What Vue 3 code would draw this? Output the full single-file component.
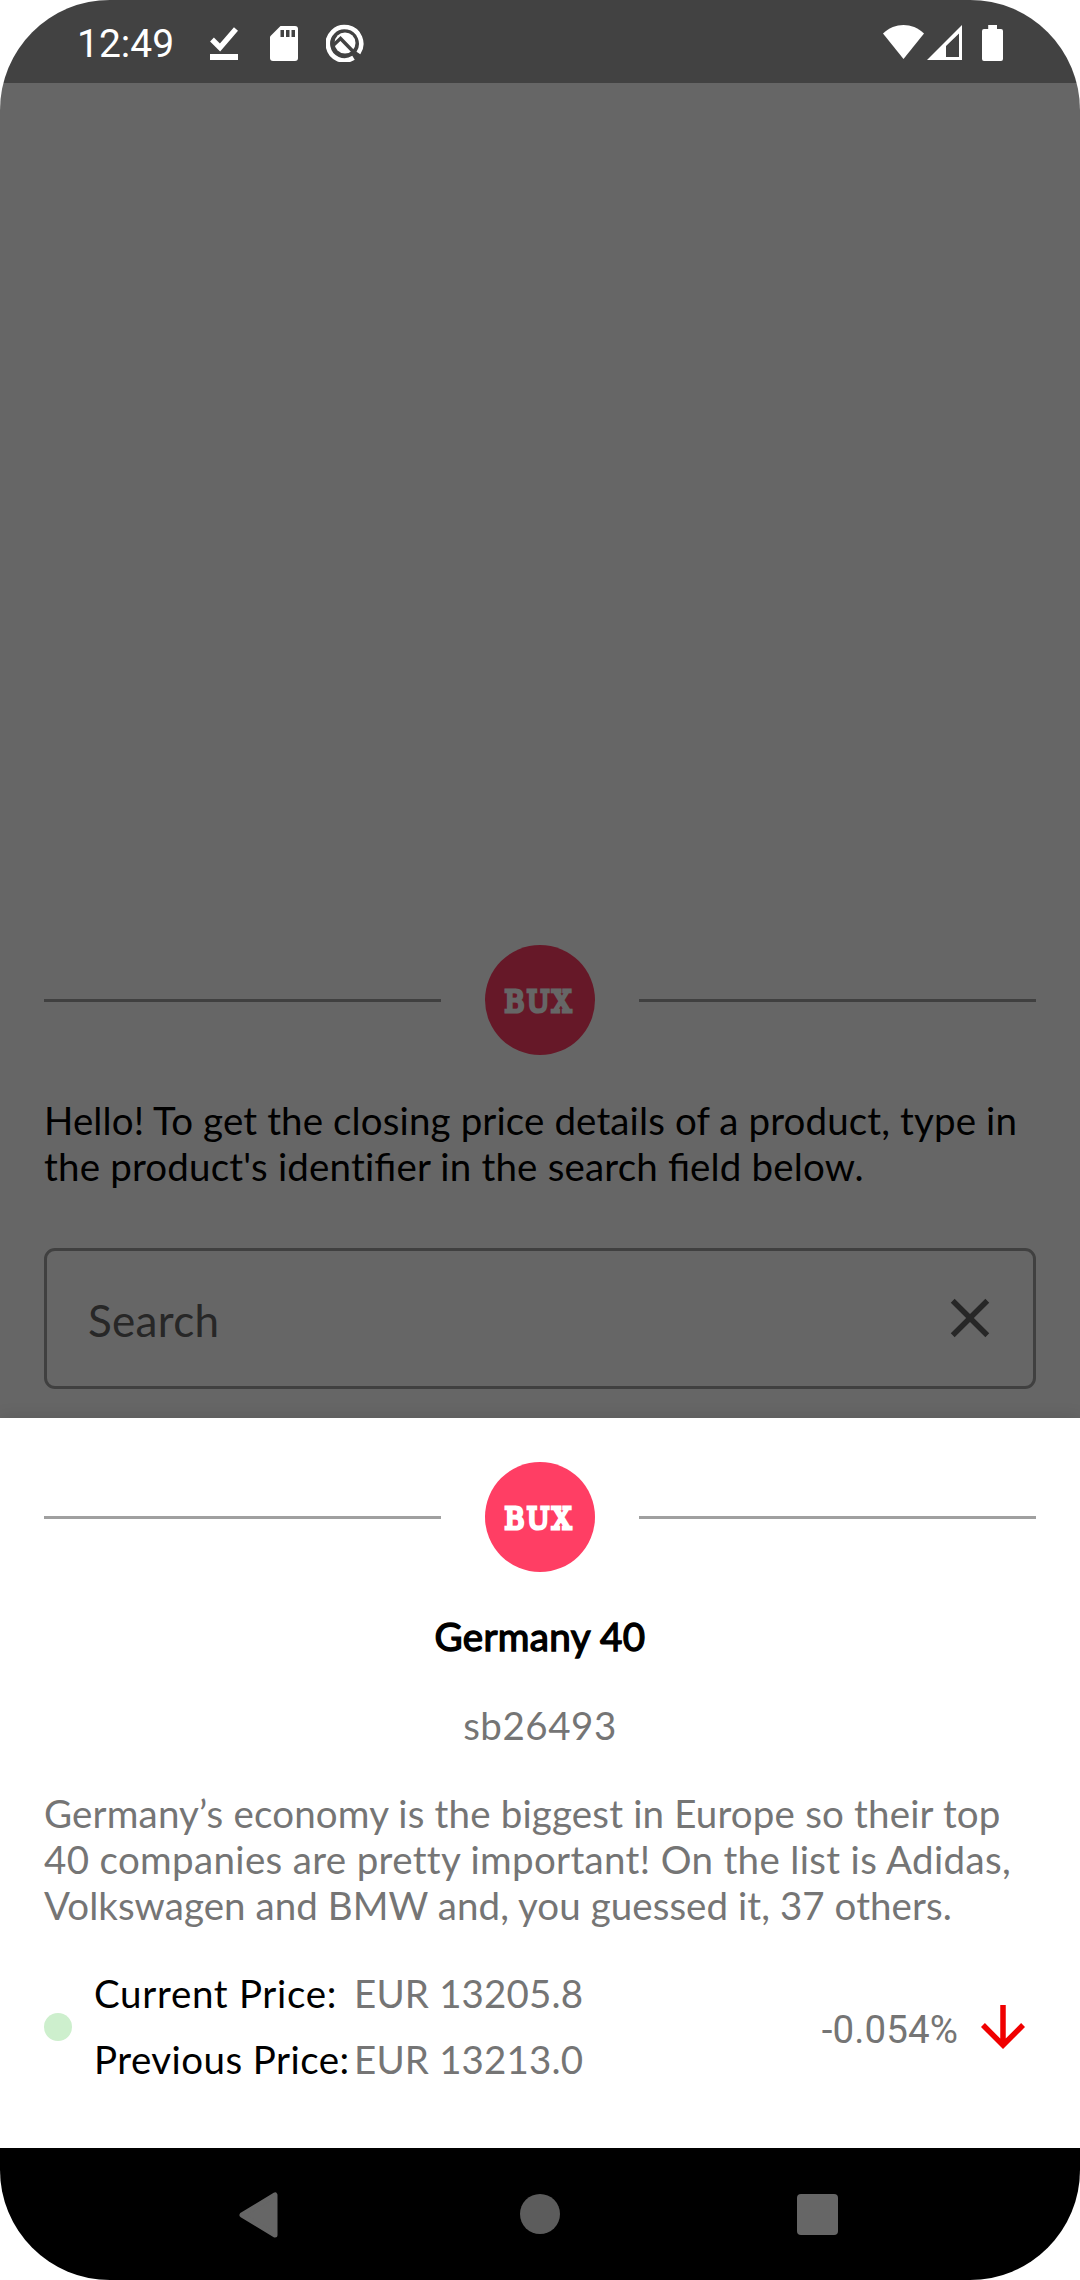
<script setup>
import { h } from 'vue'

const hello = { first: 'Hello! To get the closing price details of a product, type in' }
const product = {
  name: 'Germany 40',
  id: 'sb26493',
  description: [
    { text: 'Germany’s economy is the biggest in Europe so their top', spacing: 0.17 },
    { text: '40 companies are pretty important! On the list is Adidas,', spacing: 0.34 },
    { text: 'Volkswagen and BMW and, you guessed it, 37 others.', spacing: 0.06 }
  ],
  change: '-0.054%'
}
const prices = [
  { label: 'Current Price:', value: 'EUR 13205.8', spacing: 0.7 },
  { label: 'Previous Price:', value: 'EUR 13213.0', spacing: 0.45 }
]

const BuxLogo = () =>
  h('svg', { width: 110, height: 110, viewBox: '0 0 110 110' }, [
    h('circle', { cx: 55, cy: 55, r: 55, fill: '#ff3e64' }),
    h('text', {
      x: 19.5, y: 67.4, textLength: 69, lengthAdjust: 'spacingAndGlyphs',
      'font-family': '"DejaVu Serif", serif', 'font-size': 30, 'letter-spacing': 2.6,
      fill: '#fff', stroke: '#fff', 'stroke-width': 3.2
    }, 'BUX')
  ])
</script>

<template>
  <div class="phone">
    <header class="status">
      <span class="time">12:49</span>
      <svg class="ic-done" width="28" height="34" viewBox="0 0 28 34">
        <path d="M2 13.5L10 21.5L26 3" fill="none" stroke="#fff" stroke-width="5.4" />
        <path d="M0 28h28v6H0z" fill="#fff" />
      </svg>
      <svg class="ic-sd" width="28" height="35" viewBox="0 0 28 35">
        <path d="M10.500 0H25a3 3 0 0 1 3 3V32a3 3 0 0 1-3 3H3a3 3 0 0 1-3-3V10.500z" fill="#fff" />
        <path d="M10.500 4h3.500v7h-3.500zM16 4h3.500v7H16zM21.500 4H25v7h-3.500z" fill="#424242" />
      </svg>
      <svg class="ic-q" width="38" height="38" viewBox="0 0 38 38">
        <path d="M27.500 33.800A16.700 16.700 0 1 1 32.400 29" fill="none" stroke="#fff" stroke-width="4.600" />
        <circle cx="19" cy="19" r="10.500" fill="#fff" />
        <path d="M6 22.500L14.500 14.500L31.500 32" fill="none" stroke="#424242" stroke-width="3.400" />
      </svg>
      <span class="grow"></span>
      <svg width="41" height="34" viewBox="0 0 41 34">
        <path d="M20.500 34L0 8.500C12 -2.700 29 -2.700 41 8.500z" fill="#fff" />
      </svg>
      <svg class="ic-cell" width="35" height="35" viewBox="0 0 35 35">
        <path fill-rule="evenodd" d="M35 0V35H0zM32 8.500L19 21V32H32z" fill="#fff" />
      </svg>
      <svg class="ic-bat" width="21" height="36" viewBox="0 0 21 36">
        <path d="M6.200 0h8.800v4h4a2 2 0 0 1 2 2v28a2 2 0 0 1-2 2H2a2 2 0 0 1-2-2V6a2 2 0 0 1 2-2h4.200z" fill="#fff" />
      </svg>
    </header>

    <main class="page">
      <div class="brand"><i></i><BuxLogo /><i></i></div>
      <p class="hello">{{ hello.first }}<br /><span class="second">the product's identi<b>fi</b>er in the search <b>fi</b>eld below.</span></p>
      <div class="search">
        <span>Search</span>
        <svg width="66" height="66" viewBox="0 0 24 24">
          <path fill="#616161" d="M19 6.410L17.590 5 12 10.590 6.410 5 5 6.410 10.590 12 5 17.590 6.410 19 12 13.410 17.590 19 19 17.590 13.410 12z" />
        </svg>
      </div>
      <div class="scrim"></div>
    </main>

    <section class="sheet">
      <div class="brand"><i></i><BuxLogo /><i></i></div>
      <h1>{{ product.name }}</h1>
      <p class="ident">{{ product.id }}</p>
      <p class="desc">
        <span v-for="line in product.description" :key="line.text" :style="{ letterSpacing: line.spacing + 'px' }">{{ line.text }}</span>
      </p>
      <div class="quote">
        <span class="dot"></span>
        <dl>
          <div v-for="p in prices" :key="p.label">
            <dt :style="{ letterSpacing: p.spacing + 'px' }">{{ p.label }}</dt>
            <dd>{{ p.value }}</dd>
          </div>
        </dl>
        <span class="change">{{ product.change }}</span>
        <svg class="arrow" width="66" height="66" viewBox="0 0 24 24">
          <path fill="#f00000" d="M20 12l-1.410-1.410L13 16.170V4h-2v12.170l-5.580-5.590L4 12l8 8z" />
        </svg>
      </div>
    </section>

    <nav class="nav">
      <svg class="back" width="39" height="46" viewBox="0 0 39 46">
        <path d="M36 3V43L3 23z" fill="#666" stroke="#666" stroke-width="5" stroke-linejoin="round" />
      </svg>
      <span class="home"></span>
      <span class="recent"></span>
    </nav>
  </div>
</template>

<style>
body {
  margin: 0;
  background: #fff;
}
</style>

<style scoped>
.phone {
  width: 1080px;
  height: 2280px;
  display: flex;
  flex-direction: column;
  overflow: hidden;
  border-radius: 110px;
  background: #fff;
  font-family: Lato, sans-serif;
  font-size: 38.5px;
  line-height: 46px;
  font-variant-ligatures: none;
  color: #000;
}
p, h1, dl, dd {
  margin: 0;
}
svg {
  display: block;
  flex: none;
}
.status {
  height: 83px;
  flex: none;
  box-sizing: border-box;
  padding: 25px 77px 0 77px;
  display: flex;
  align-items: flex-start;
  background: #424242;
}
.time {
  width: 133px;
  font-family: Roboto, sans-serif;
  font-size: 39px;
  line-height: 38px;
  color: #fff;
}
.ic-done { margin-top: 1px; }
.ic-sd { margin: 1px 0 0 32px; }
.ic-q { margin: -1px 0 0 28px; }
.grow { flex: 1; }
.ic-cell { margin-left: 3px; }
.ic-bat { margin-left: 20px; }
.page {
  position: relative;
  height: 1335px;
  flex: none;
  box-sizing: border-box;
  padding: 862px 44px 0;
}
.scrim {
  position: absolute;
  inset: 0;
  background: rgba(0, 0, 0, 0.6);
}
.brand {
  display: flex;
  align-items: center;
  gap: 44px;
}
.brand i {
  flex: 1;
  height: 3px;
  background: #a0a0a0;
}
.hello {
  margin-top: 42px;
  white-space: nowrap;
  letter-spacing: 0.12px;
}
.second {
  letter-spacing: 0.18px;
}
.hello b {
  font-weight: 400;
  letter-spacing: 0;
  font-variant-ligatures: common-ligatures;
}
.search {
  height: 141px;
  box-sizing: border-box;
  margin-top: 59px;
  padding: 0 30px 2px 41px;
  display: flex;
  align-items: center;
  justify-content: space-between;
  border: 3px solid #a0a0a0;
  border-radius: 11px;
  font-size: 44px;
  letter-spacing: 0.3px;
  color: #616161;
}
.search span {
  margin-top: 5px;
}
.sheet {
  position: relative;
  height: 730px;
  flex: none;
  box-sizing: border-box;
  padding: 44px 44px 0;
  background: #fff;
  color: #757575;
  box-shadow: 0 0 16px rgba(0, 0, 0, 0.12);
}
h1 {
  margin-top: 41px;
  font-size: 38.5px;
  font-weight: 400;
  -webkit-text-stroke: 1.4px #000;
  letter-spacing: 0.35px;
  text-align: center;
  color: #000;
}
.ident {
  margin-top: 43px;
  text-align: center;
  letter-spacing: 0.55px;
}
.desc {
  margin-top: 42px;
}
.desc span {
  display: block;
  white-space: nowrap;
}
.quote {
  display: flex;
  align-items: center;
  margin-top: 32px;
  height: 132px;
}
.dot {
  width: 28px;
  height: 28px;
  margin-top: 2px;
  border-radius: 50%;
  background: #cdefcd;
}
dl {
  flex: 1;
  margin-left: 22px;
}
dl div {
  display: flex;
  height: 66px;
  align-items: center;
  white-space: nowrap;
}
dt {
  width: 260px;
  color: #000;
}
dd {
  letter-spacing: 0.15px;
}
.change {
  font-family: Roboto, sans-serif;
  margin: 8px 12px 0 0;
  letter-spacing: 0.1px;
}
.arrow {
  margin-top: 2px;
}
.nav {
  position: relative;
  height: 132px;
  flex: none;
  box-sizing: border-box;
  display: flex;
  align-items: flex-start;
  padding: 44px 0 0 239px;
  background: #000;
}
.home {
  width: 40px;
  height: 40px;
  margin: 2px 0 0 242px;
  border-radius: 50%;
  background: #5c5c5c;
}
.recent {
  width: 41px;
  height: 41px;
  margin: 2px 0 0 237px;
  border-radius: 4px;
  background: #666;
}
</style>
